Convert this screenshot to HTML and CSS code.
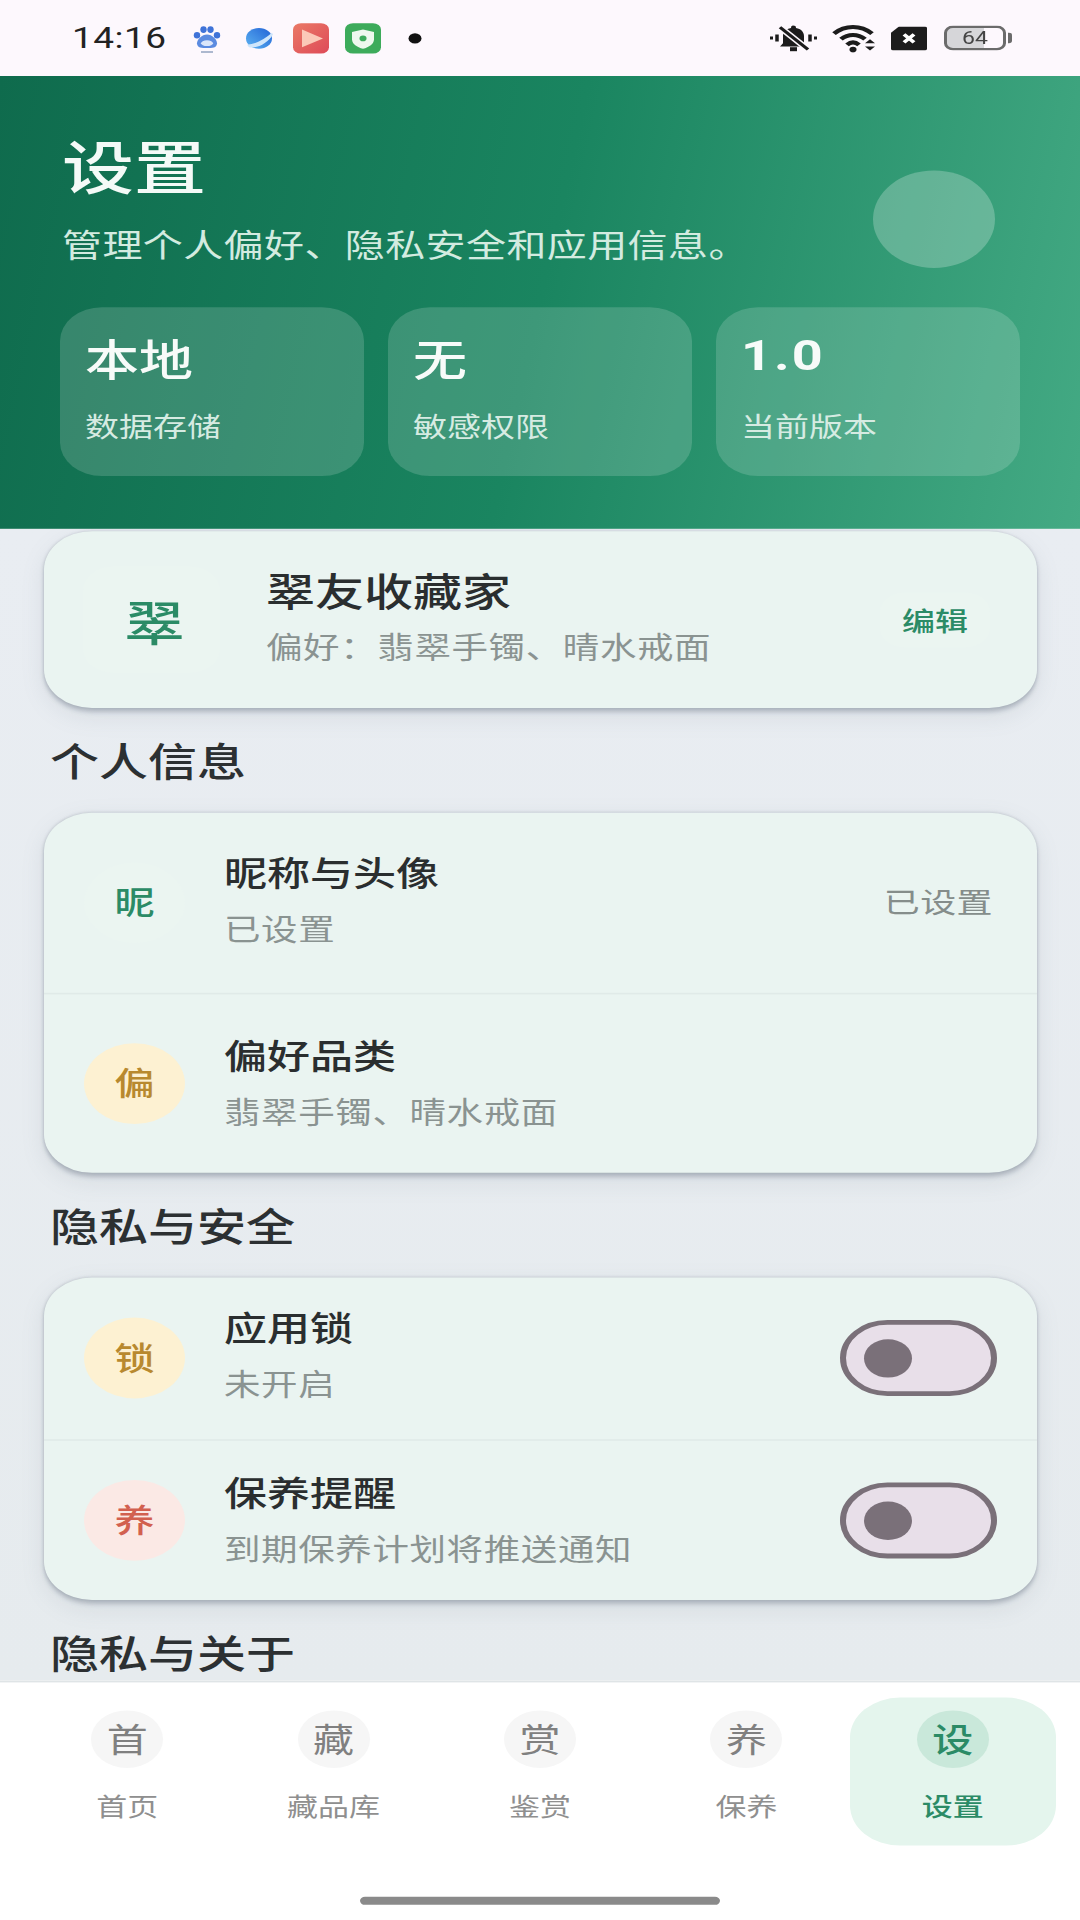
FILE: index.html
```html
<!DOCTYPE html>
<html lang="zh-CN">
<head>
	<meta charset="utf-8">
	<title>设置</title>
	<link rel="stylesheet" href="styles.css">
</head>
<body>
	<div class="frame">
	<div class="app">
		<div class="status">
			<div class="status-left">
				<span class="time">14:16</span>
				<svg class="tray" viewBox="0 0 36 40">
					<ellipse cx="8" cy="16" rx="3.200" ry="4" fill="#3f73d8"/>
					<ellipse cx="14.500" cy="9" rx="3.200" ry="4.200" fill="#3f73d8"/>
					<ellipse cx="21.500" cy="9" rx="3.200" ry="4.200" fill="#3f73d8"/>
					<ellipse cx="28" cy="16" rx="3.200" ry="4" fill="#3f73d8"/>
					<path d="M18 15c5 0 10 6 10 11 0 6-5 6-10 6s-10 0-10-6c0-5 5-11 10-11z" fill="#5b8be0"/>
					<ellipse cx="18" cy="26" rx="6" ry="3.600" fill="#dbe6fa"/>
					<rect x="12" y="36" width="12" height="2" fill="#9aa8c4"/>
				</svg>
				<svg class="tray" viewBox="0 0 36 40">
					<defs>
						<linearGradient id="ball" x1="0" y1="1" x2="1" y2="0">
							<stop offset="0" stop-color="#5db4f2"/>
							<stop offset="1" stop-color="#2263d6"/>
						</linearGradient>
					</defs>
					<circle cx="18" cy="20" r="13" fill="url(#ball)"/>
					<path d="M6 28c9-1 18-7 25-15l1 2c-5 10-15 18-24 16z" fill="#cfe6fb"/>
				</svg>
				<svg class="tray" viewBox="0 0 36 40">
					<defs>
						<linearGradient id="red" x1="0" y1="0" x2="1" y2="1">
							<stop offset="0" stop-color="#ea7a66"/>
							<stop offset="1" stop-color="#de4a58"/>
						</linearGradient>
					</defs>
					<rect x="0" y="1" width="36" height="38" rx="8" fill="url(#red)"/>
					<path d="M9 9l21 11-21 11z" fill="#fbc9b8"/>
				</svg>
				<svg class="tray" viewBox="0 0 36 40">
					<rect x="0" y="1" width="36" height="38" rx="8" fill="#3dab5b"/>
					<path d="M18 9l11 3v9c0 6-5 10-11 12-6-2-11-6-11-12v-9z" fill="#eef8ee"/>
					<circle cx="18" cy="20" r="3.500" fill="#3dab5b"/>
				</svg>
				<svg class="tray" viewBox="0 0 36 40">
					<circle cx="18" cy="20" r="6.500" fill="#111"/>
				</svg>
			</div>
			<div class="status-right">
				<svg class="bell" viewBox="0 0 49 36">
					<path d="M24 2c2 0 3 1 3 3 5 1 8 5 8 10v9l3 4H11l3-4v-9c0-5 3-9 8-10 0-2 1-3 2-3z" fill="#1c1c1c"/>
					<rect x="21" y="29" width="7" height="5" fill="#1c1c1c"/>
					<path d="M11 4l28 28" stroke="#fdf8fd" stroke-width="7"/>
					<path d="M11 4l28 28" stroke="#1c1c1c" stroke-width="3.500"/>
					<path d="M8 13v9M41 13v9" stroke="#1c1c1c" stroke-width="3.500"/>
					<path d="M1 17.500h3M45 17.500h3" stroke="#1c1c1c" stroke-width="3.500"/>
				</svg>
				<svg class="wifi" viewBox="0 0 45 36">
					<path d="M2 12c11-11 27-11 38 0" fill="none" stroke="#1c1c1c" stroke-width="5"/>
					<path d="M9 19c7-7 17-7 24 0" fill="none" stroke="#1c1c1c" stroke-width="5"/>
					<path d="M15 26c4-4 8-4 12 0" fill="none" stroke="#1c1c1c" stroke-width="5"/>
					<circle cx="21" cy="32" r="3.500" fill="#1c1c1c"/>
					<path d="M33 24l5-5 5 5zM33 28l5 5 5-5z" fill="#1c1c1c"/>
				</svg>
				<svg class="sim" viewBox="0 0 36 30">
					<path d="M8 0h26a2 2 0 0 1 2 2v26a2 2 0 0 1-2 2H2a2 2 0 0 1-2-2V8z" fill="#1c1c1c"/>
					<path d="M13 10l10 10M23 10L13 20" stroke="#fff" stroke-width="4"/>
				</svg>
				<div class="battery">64</div>
			</div>
		</div>

		<div class="hero">
			<div class="hero-dot"></div>
			<h1 class="hero-title">设置</h1>
			<p class="hero-sub">管理个人偏好、隐私安全和应用信息。</p>
			<div class="stats">
				<div class="stat">
					<div class="stat-value">本地</div>
					<div class="stat-label">数据存储</div>
				</div>
				<div class="stat">
					<div class="stat-value">无</div>
					<div class="stat-label">敏感权限</div>
				</div>
				<div class="stat">
					<div class="stat-value stat-num">1.0</div>
					<div class="stat-label">当前版本</div>
				</div>
			</div>
		</div>

		<div class="content">
			<div class="card profile">
				<div class="avatar">翠</div>
				<div class="profile-text">
					<div class="profile-name">翠友收藏家</div>
					<div class="row-sub">偏好：翡翠手镯、晴水戒面</div>
				</div>
				<div class="edit">编辑</div>
			</div>

			<h2 class="section">个人信息</h2>
			<div class="card">
				<div class="row row-tall">
					<div class="icon icon-green">昵</div>
					<div class="row-text">
						<div class="row-title">昵称与头像</div>
						<div class="row-sub">已设置</div>
					</div>
					<div class="row-value">已设置</div>
				</div>
				<div class="row row-tall">
					<div class="icon icon-amber">偏</div>
					<div class="row-text">
						<div class="row-title">偏好品类</div>
						<div class="row-sub">翡翠手镯、晴水戒面</div>
					</div>
				</div>
			</div>

			<h2 class="section">隐私与安全</h2>
			<div class="card">
				<div class="row">
					<div class="icon icon-amber">锁</div>
					<div class="row-text">
						<div class="row-title">应用锁</div>
						<div class="row-sub">未开启</div>
					</div>
					<div class="toggle"></div>
				</div>
				<div class="row">
					<div class="icon icon-red">养</div>
					<div class="row-text">
						<div class="row-title">保养提醒</div>
						<div class="row-sub">到期保养计划将推送通知</div>
					</div>
					<div class="toggle"></div>
				</div>
			</div>

			<h2 class="section">隐私与关于</h2>
		</div>

		<div class="nav">
			<div class="tabs">
				<div class="tab">
					<div class="tab-icon">首</div>
					<div class="tab-label">首页</div>
				</div>
				<div class="tab">
					<div class="tab-icon">藏</div>
					<div class="tab-label">藏品库</div>
				</div>
				<div class="tab">
					<div class="tab-icon">赏</div>
					<div class="tab-label">鉴赏</div>
				</div>
				<div class="tab">
					<div class="tab-icon">养</div>
					<div class="tab-label">保养</div>
				</div>
				<div class="tab tab-active">
					<div class="tab-icon">设</div>
					<div class="tab-label">设置</div>
				</div>
			</div>
			<div class="home-bar"></div>
		</div>
	</div>
	</div>
</body>
</html>
```

FILE: styles.css
```css
*{
	margin: 0;
	padding: 0;
	box-sizing: border-box;
}
body{
	background: #fff;
	font-family: "Noto Sans CJK SC", "Noto Sans", sans-serif;
}
.frame{
	width: 1080px;
	height: 1920px;
	overflow: hidden;
}
/* the capture is squeezed vertically: laid out at 1080x2400, then scaled */
.app{
	width: 1080px;
	height: 2400px;
	display: flex;
	flex-direction: column;
	transform: scaleY(0.8);
	transform-origin: 0 0;
}

/* status bar */
.status{
	height: 95px;
	flex: none;
	display: flex;
	align-items: center;
	justify-content: space-between;
	padding: 0 74px 0 72px;
	background: #fdf8fd;
}
.status-left,.status-right{
	display: flex;
	align-items: center;
}
.status-left{
	gap: 16px;
}
.status-right{
	gap: 14px;
}
.time{
	font-family: Roboto, sans-serif;
	font-size: 37px;
	color: #222;
	letter-spacing: 0.5px;
	margin-right: 6px;
}
.tray{
	width: 36px;
	height: 40px;
}
.bell{
	width: 49px;
	height: 36px;
}
.wifi{
	width: 45px;
	height: 36px;
}
.sim{
	width: 36px;
	height: 30px;
}
.battery{
	position: relative;
	width: 62px;
	height: 31px;
	margin-left: 3px;
	border: 3px solid #6b6b6b;
	border-radius: 9px;
	background: linear-gradient(to right, #d6d6d9 66%, #fdf8fd 66%);
	font-family: Roboto, sans-serif;
	font-size: 23px;
	line-height: 25px;
	text-align: center;
	color: #444;
}
.battery::after{
	content: "";
	position: absolute;
	top: 6px;
	right: -9px;
	width: 4px;
	height: 13px;
	border-radius: 0 3px 3px 0;
	background: #6b6b6b;
}

/* hero */
.hero{
	position: relative;
	height: 566px;
	flex: none;
	padding: 68px 60px 0;
	background: linear-gradient(100deg, #0f6b4d 0%, #1a8560 50%, #44aa84 100%);
}
.hero-dot{
	position: absolute;
	top: 118px;
	right: 85px;
	width: 122px;
	height: 122px;
	border-radius: 50%;
	background: rgba(255,255,255,0.24);
}
.hero-title{
	padding-left: 2px;
	font-size: 72px;
	line-height: 84px;
	font-weight: 500;
	color: #f4faf7;
}
.hero-sub{
	margin-top: 29px;
	padding-left: 2px;
	font-size: 40px;
	line-height: 56px;
	letter-spacing: 0.4px;
	color: #d3ebe0;
}
.stats{
	display: flex;
	gap: 24px;
	margin-top: 52px;
}
.stat{
	width: 305px;
	height: 211px;
	padding: 31px 25px 0;
	border-radius: 42px;
	background: rgba(255,255,255,0.16);
}
.stat-value{
	font-size: 54px;
	line-height: 64px;
	font-weight: 500;
	color: #f7fbf9;
}
.stat-num{
	font-family: Roboto, sans-serif;
	font-weight: 700;
	letter-spacing: 2px;
	line-height: 58px;
	height: 64px;
}
.stat-label{
	margin-top: 29px;
	font-size: 34px;
	line-height: 48px;
	color: #d6ebe2;
}

/* list */
.content{
	flex: 1;
	overflow: hidden;
	padding: 3px 43px 0 44px;
	background: linear-gradient(to bottom, #e9edf2, #e6ebee);
}
.card{
	border-radius: 48px;
	background: #eaf4f1;
	box-shadow: 0 4px 5px rgba(115,125,140,0.4), 0 10px 26px rgba(115,125,140,0.14), 0 0 3px rgba(115,125,140,0.25);
}
.profile{
	height: 221px;
	display: flex;
	align-items: center;
	padding: 0 47px 0 39px;
}
.avatar{
	width: 137px;
	height: 133px;
	flex: none;
	display: flex;
	align-items: center;
	justify-content: center;
	padding-left: 6px;
	border-radius: 30px;
	background: #ebf5f1;
	font-size: 60px;
	font-weight: 500;
	color: #2b8b66;
}
.profile-text{
	flex: 1;
	margin-left: 46px;
	padding-bottom: 12px;
}
.profile-name{
	font-size: 49px;
	line-height: 64px;
	font-weight: 500;
	color: #2a2e2f;
}
.edit{
	width: 110px;
	padding: 12px 0;
	border-radius: 24px;
	background: #ebf5f1;
	font-size: 33px;
	line-height: 44px;
	font-weight: 500;
	text-align: center;
	color: #2b8b66;
}
.section{
	margin: 29px 0 32px 6px;
	font-size: 49px;
	line-height: 70px;
	font-weight: 500;
	color: #2c3032;
}
.row{
	height: 201.500px;
	display: flex;
	align-items: center;
	padding: 0 40px 0 40px;
}
.row-tall{
	height: 225px;
	padding-right: 44px;
}
.row + .row{
	border-top: 2px solid #e0eae8;
}
.icon{
	width: 101px;
	height: 101px;
	flex: none;
	display: flex;
	align-items: center;
	justify-content: center;
	padding-bottom: 5px;
	border-radius: 50%;
	font-size: 40px;
	font-weight: 500;
}
.icon-green{
	background: #ebf5f1;
	color: #2b8b66;
}
.icon-amber{
	background: #fdf1d2;
	color: #b8892f;
}
.icon-red{
	background: #fbe9e5;
	color: #d2604f;
}
.row-text{
	flex: 1;
	margin-left: 39px;
	padding-bottom: 14px;
}
.row + .row .row-text{
	padding-bottom: 8px;
}
.row-title{
	font-size: 43px;
	line-height: 60px;
	font-weight: 500;
	color: #2a2e2f;
}
.row-sub{
	margin-top: 17px;
	font-size: 36.500px;
	line-height: 50px;
	letter-spacing: 0.6px;
	color: #8a9391;
}
.profile .row-sub{
	margin-top: 14px;
}
.row-value{
	padding-bottom: 8px;
	font-size: 36px;
	line-height: 50px;
	letter-spacing: 0.4px;
	color: #858d8b;
}
.toggle{
	position: relative;
	width: 157px;
	height: 95px;
	flex: none;
	border: 6px solid #7a7079;
	border-radius: 48px;
	background: #e8dfe9;
}
.toggle::after{
	content: "";
	position: absolute;
	top: 18px;
	left: 18px;
	width: 48px;
	height: 48px;
	border-radius: 50%;
	background: #7a7079;
}

/* bottom nav */
.nav{
	height: 299px;
	flex: none;
	padding: 19px 24px 0;
	border-top: 2px solid #dfe4e6;
	background: #fff;
}
.tabs{
	display: grid;
	grid-template-columns: repeat(5, 1fr);
}
.tab{
	height: 185px;
	padding-top: 16px;
	display: flex;
	flex-direction: column;
	align-items: center;
	border-radius: 50px;
}
.tab-icon{
	width: 72px;
	height: 72px;
	display: flex;
	align-items: center;
	justify-content: center;
	padding-bottom: 5px;
	border-radius: 50%;
	background: #f6f6f6;
	font-size: 41px;
	color: #808080;
}
.tab-label{
	margin-top: 25px;
	font-size: 31px;
	line-height: 44px;
	color: #8f8f8f;
}
.tab-active{
	background: #e4f5ed;
}
.tab-active .tab-icon{
	background: #c9e8da;
	color: #2b8b66;
	font-weight: 500;
}
.tab-active .tab-label{
	color: #2b8b66;
	font-weight: 500;
}
.home-bar{
	width: 360px;
	height: 10px;
	margin: 64px auto 0;
	border-radius: 5px;
	background: #8a8a8a;
}
```
